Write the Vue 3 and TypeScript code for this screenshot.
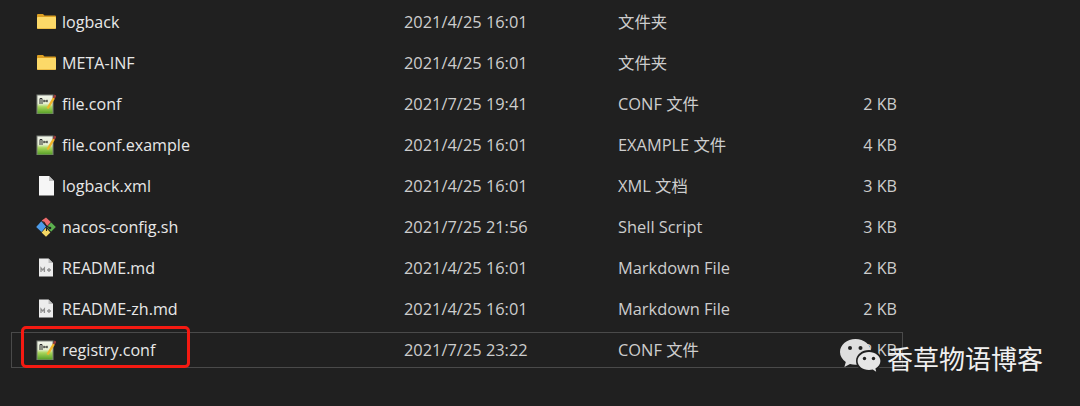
<script setup lang="ts">
type IconKind = 'folder' | 'conf' | 'blank' | 'git' | 'md'

interface FileRow {
  name: string
  date: string
  type: string
  size: string
  icon: IconKind
  selected?: boolean
}

const rows: FileRow[] = [
  { name: 'logback', date: '2021/4/25 16:01', type: '文件夹', size: '', icon: 'folder' },
  { name: 'META-INF', date: '2021/4/25 16:01', type: '文件夹', size: '', icon: 'folder' },
  { name: 'file.conf', date: '2021/7/25 19:41', type: 'CONF 文件', size: '2 KB', icon: 'conf' },
  { name: 'file.conf.example', date: '2021/4/25 16:01', type: 'EXAMPLE 文件', size: '4 KB', icon: 'conf' },
  { name: 'logback.xml', date: '2021/4/25 16:01', type: 'XML 文档', size: '3 KB', icon: 'blank' },
  { name: 'nacos-config.sh', date: '2021/7/25 21:56', type: 'Shell Script', size: '3 KB', icon: 'git' },
  { name: 'README.md', date: '2021/4/25 16:01', type: 'Markdown File', size: '2 KB', icon: 'md' },
  { name: 'README-zh.md', date: '2021/4/25 16:01', type: 'Markdown File', size: '2 KB', icon: 'md' },
  { name: 'registry.conf', date: '2021/7/25 23:22', type: 'CONF 文件', size: '2 KB', icon: 'conf', selected: true }
]
</script>

<template>
  <div class="page">
    <svg class="defs" width="0" height="0">
      <defs>
        <linearGradient id="confFill" x1="0" y1="0" x2="0" y2="1">
          <stop offset="0" stop-color="#f1f3ea" />
          <stop offset="0.45" stop-color="#e6efd2" />
          <stop offset="0.62" stop-color="#a8d65c" />
          <stop offset="1" stop-color="#4f9a22" />
        </linearGradient>
      </defs>
    </svg>

    <div class="list">
      <div v-for="row in rows" :key="row.name" class="row" :class="{ selected: row.selected }">
        <div class="name">
          <svg class="icon" viewBox="0 0 20 20" width="20" height="20">
            <template v-if="row.icon === 'folder'">
              <path d="M1 3q0-1 1-1h5l1.500 1.500H19q1 0 1 1V16q0 1-1 1H2q-1 0-1-1z" fill="#dc9f22" />
              <path d="M1 6q0-1 1-1h17q1 0 1 1v10q0 .6-.6.6H1.600q-.6 0-.6-.6z" fill="#fcd968" />
            </template>
            <template v-else-if="row.icon === 'conf'">
              <rect x="1" y="1" width="16" height="19" fill="url(#confFill)" stroke="#7d827a" />
              <path d="M4 10V4.500h2V10M7.500 7h4M8 5.800v2.400M11 5.800v2.400" fill="none" stroke="#2c2c2c" stroke-width="1" />
              <path d="M11.500 14.500L18 3.800" stroke="#f0b429" stroke-width="2.400" />
              <path d="M17.800 4.100l1.700-3" stroke="#9c3b3b" stroke-width="2.200" />
            </template>
            <template v-else-if="row.icon === 'blank'">
              <path d="M3 0h10l5 5v14.500H3z" fill="#f6f6f6" />
              <path d="M13 0v5h5z" fill="#bfbfbf" />
            </template>
            <template v-else-if="row.icon === 'git'">
              <path d="M10 .5l4.800 4.600-3.600 3.900-5.400-5.400z" fill="#ec6b6b" />
              <path d="M5.300 4.200L10 9.600 5.500 15 .2 10z" fill="#4d9be8" />
              <path d="M15.200 5.500l4.600 4.600-4.700 4.700-4.300-4.700z" fill="#5cb04e" />
              <path d="M10 10.800l4.400 4.600-4.400 4.400-4.400-4.300z" fill="#f3d765" />
              <path d="M7.500 4.500L10.500 9l3.500 2M10.500 9v5" fill="none" stroke="#222" stroke-width="1.100" />
              <circle cx="14" cy="11" r="1.300" fill="#222" />
            </template>
            <template v-else>
              <path d="M3 .5h9.500L17 5v13.500H3z" fill="#ececec" />
              <path d="M12.500 .5V5H17z" fill="#bdbdbd" />
              <path d="M5 14v-4l1.700 2 1.700-2v4M11 12h4M13 10v4" fill="none" stroke="#8f8f8f" stroke-width="1.300" />
            </template>
          </svg>
          <span>{{ row.name }}</span>
        </div>
        <div class="date">{{ row.date }}</div>
        <div class="type">{{ row.type }}</div>
        <div class="size">{{ row.size }}</div>
      </div>
    </div>

    <div class="mark" />

    <div class="watermark">
      <svg class="wechat" viewBox="0 0 42 36" width="42" height="36">
        <path d="M15.500 0C7 0 0 5.700 0 13c0 4 2.300 7.500 5.800 10l-1.400 5 5.600-3c1.800.5 3.600.8 5.500.8 8.500 0 15.500-5.700 15.500-12.800S24 0 15.500 0z" fill="#dedede" />
        <circle cx="10" cy="9" r="2" fill="#202020" />
        <circle cx="20.500" cy="9" r="2" fill="#202020" />
        <path d="M29 11c-7.200 0-13 4.900-13 11s5.800 11 13 11c1.300 0 2.600-.2 3.800-.5l4.200 2.900-1-4.300c3.700-2 6-5.300 6-9.100 0-6.100-5.800-11-13-11z" fill="#202020" />
        <path d="M29 13c-6.300 0-11.400 4-11.400 9s5.100 9 11.400 9c1.300 0 2.600-.2 3.800-.5l3.400 2.300-.8-3.300c3.100-1.700 5-4.400 5-7.500 0-5-5.100-9-11.400-9z" fill="#e6e6e6" />
        <circle cx="24.500" cy="19.500" r="1.700" fill="#202020" />
        <circle cx="33.500" cy="19.500" r="1.700" fill="#202020" />
      </svg>
      <span class="wm-text">香草物语博客</span>
    </div>
  </div>
</template>

<style scoped>
.page {
  position: relative;
  width: 1080px;
  height: 406px;
  overflow: hidden;
  background: #202020;
  font-family: "Open Sans", "Noto Sans CJK SC", sans-serif;
  font-size: 16.1px;
  line-height: 20px;
}

.defs {
  position: absolute;
}

.list {
  display: flex;
  flex-direction: column;
  gap: 5px;
  width: 892px;
  margin-left: 11px;
  padding-top: 4px;
}

.row {
  display: flex;
  align-items: center;
  height: 36px;
  box-sizing: border-box;
  border: 1px solid transparent;
  color: #cdcdcd;
}

.row.selected {
  border-color: #4a4a4a;
}

.name {
  display: flex;
  align-items: center;
  width: 392px;
  padding-left: 24px;
  box-sizing: border-box;
  color: #e8e8e8;
}

.icon {
  flex: none;
  margin-right: 6px;
}

.date {
  width: 214px;
  font-size: 16.4px;
}

.type {
  width: 230px;
  font-size: 16.4px;
}

.size {
  width: 49px;
  text-align: right;
}

.mark {
  position: absolute;
  left: 21px;
  top: 326px;
  width: 169px;
  height: 42px;
  box-sizing: border-box;
  border: 3px solid #f41a12;
  border-radius: 5px;
}

.watermark {
  position: absolute;
  left: 840px;
  top: 338px;
  display: flex;
  align-items: center;
  gap: 5px;
  color: #f0f0f0;
  font-family: "Noto Sans CJK SC", sans-serif;
  font-size: 26px;
  line-height: 36px;
}

.wm-text {
  padding-top: 2px;
}

.wechat {
  flex: none;
}
</style>
